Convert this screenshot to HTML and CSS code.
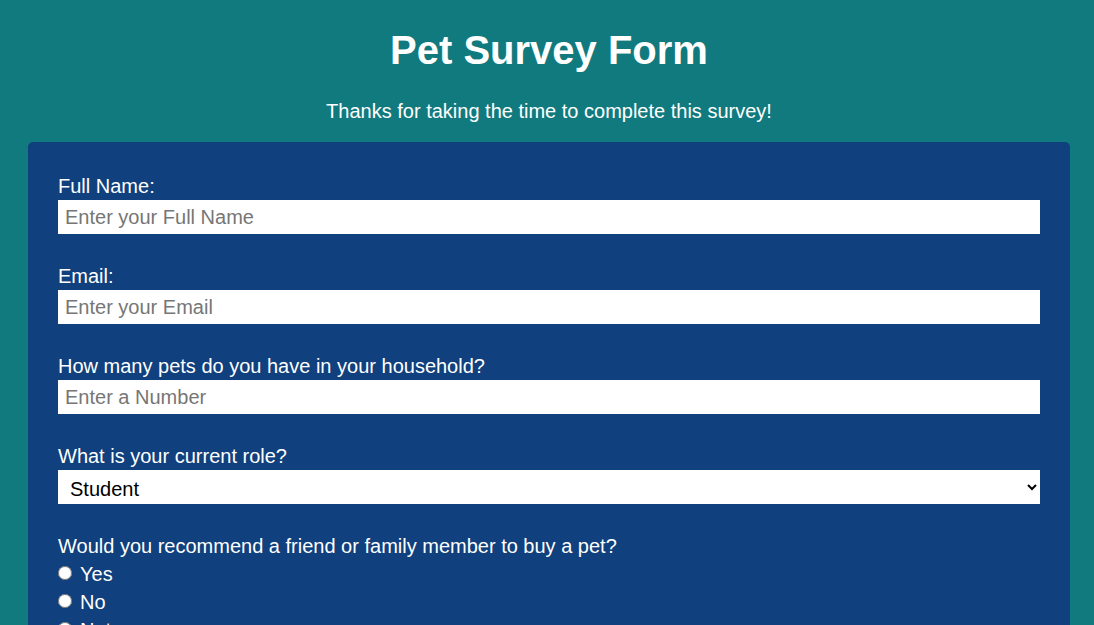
FILE: index.html
```html
<!DOCTYPE html>
<html lang="en">
<head>
<meta charset="utf-8">
<title>Pet Survey Form</title>
<link rel="stylesheet" href="styles.css">
</head>
<body>
<header class="header">
  <h1 class="title">Pet Survey Form</h1>
  <p class="description">Thanks for taking the time to complete this survey!</p>
</header>
<form class="survey">
  <div class="group">
    <label class="label" for="name">Full Name:</label>
    <input class="field" id="name" type="text" placeholder="Enter your Full Name">
  </div>
  <div class="group">
    <label class="label" for="email">Email:</label>
    <input class="field" id="email" type="email" placeholder="Enter your Email">
  </div>
  <div class="group">
    <label class="label" for="number">How many pets do you have in your household?</label>
    <input class="field" id="number" type="number" placeholder="Enter a Number">
  </div>
  <div class="group">
    <label class="label" for="role">What is your current role?</label>
    <select class="field select" id="role">
      <option>Student</option>
      <option>Full Time Job</option>
      <option>Prefer not to say</option>
    </select>
  </div>
  <div class="group">
    <p class="label">Would you recommend a friend or family member to buy a pet?</p>
    <label class="radio"><input type="radio" name="rec"> Yes</label>
    <label class="radio"><input type="radio" name="rec"> No</label>
    <label class="radio"><input type="radio" name="rec"> Not sure</label>
  </div>
</form>
</body>
</html>
```
FILE: styles.css
```css
html, body {
  margin: 0;
  padding: 0;
}
body {
  background: #117a7e;
  color: #ffffff;
  font-family: "Liberation Sans", Arial, sans-serif;
  padding: 0 24px 0 28px;
}
.header {
  text-align: center;
  padding-top: 27px;
}
.title {
  margin: 0;
  font-size: 40px;
  line-height: 46px;
  font-weight: bold;
}
.description {
  margin: 27px 0 0;
  font-size: 20px;
  line-height: 23px;
}
.survey {
  margin-top: 19px;
  background: #10407d;
  border-radius: 5px;
  padding: 33px 30px 20px;
}
.group {
  margin-bottom: 31px;
}
.label {
  display: block;
  margin: 0 0 2px;
  font-size: 20px;
  line-height: 23px;
}
.field {
  display: block;
  width: 100%;
  box-sizing: border-box;
  height: 34px;
  border: none;
  border-radius: 0;
  margin: 0;
  padding: 0 7px;
  font-family: "Liberation Sans", Arial, sans-serif;
  font-size: 20px;
  color: #000;
  background: #fff;
}
.field::placeholder {
  color: #767676;
}
.select {
  padding: 3px 8px 0;
}
.radio {
  display: flex;
  align-items: center;
  font-size: 20px;
  line-height: 28px;
}
.radio input {
  margin: -2px 8px 0 0;
  width: 14px;
  height: 14px;
}
```
